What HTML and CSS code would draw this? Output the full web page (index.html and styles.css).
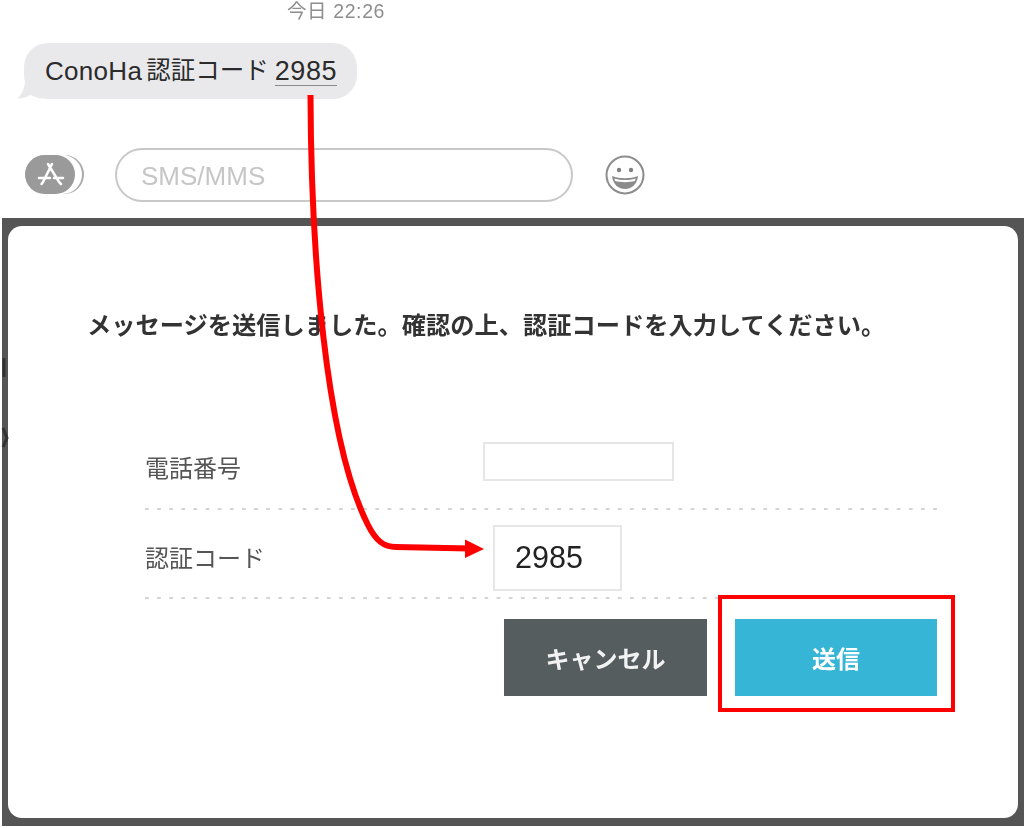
FILE: index.html
```html
<!DOCTYPE html>
<html lang="ja">
<head>
<meta charset="utf-8">
<title>ConoHa 認証コード</title>
<link rel="stylesheet" href="styles.css">
</head>
<body>
<div class="page">
  <section class="chat">
    <div class="time">今日 22:26</div>
    <div class="bubble-row">
      <div class="bubble">
        <svg class="tail" width="24" height="20" viewBox="0 0 24 20"><path d="M8 0C8 8 6 15 0 19.500C6 19.500 10 18 13 16L24 20V0Z"/></svg>
        <span class="bubble-latin">ConoHa</span><span class="bubble-cjk">認証コード</span><span class="code-link">2985</span>
      </div>
    </div>
    <div class="composer">
      <div class="apps">
        <svg width="60" height="40" viewBox="0 0 60 40">
          <rect class="apps-back" x="9" y="0" width="50" height="39" rx="19.500"/>
          <rect class="apps-gap" x="7" y="0" width="50" height="39" rx="19.500"/>
          <rect class="apps-pill" x="0" y="0" width="50" height="39" rx="19.500"/>
          <path class="apps-glyph" d="M27 9L18 27L16.500 29M23 9L34 27L36 29M14 23H25M29 23H38"/>
        </svg>
      </div>
      <div class="sms">SMS/MMS</div>
      <svg class="emoji" width="40" height="40" viewBox="0 0 40 40">
        <circle class="emoji-face" cx="20" cy="20" r="18.500"/>
        <circle class="emoji-eye" cx="14" cy="15" r="2.200"/>
        <circle class="emoji-eye" cx="26" cy="15" r="2.200"/>
        <path class="emoji-mouth" d="M7 21C15 24 25 24 33 21C32 30 26 34 20 34C14 34 8 30 7 21Z"/>
        <path class="emoji-teeth" d="M9.500 23.500C16 25.500 24 25.500 30.500 23.500L30 26C24 27.500 16 27.500 10 26Z"/>
      </svg>
    </div>
  </section>
  <section class="overlay">
    <div class="dialog">
      <p class="message">メッセージを送信しました。確認の上、認証コードを入力してください。</p>
      <div class="form">
        <div class="row row-phone">
          <div class="label">電話番号</div>
          <div class="input input-phone"></div>
        </div>
        <div class="row row-code">
          <div class="label">認証コード</div>
          <div class="input input-code">2985</div>
        </div>
      </div>
      <div class="actions">
        <div class="btn btn-cancel">キャンセル</div>
        <div class="btn btn-send">送信</div>
      </div>
    </div>
  </section>
  <svg class="annotation" width="1024" height="828" viewBox="0 0 1024 828">
    <path class="edge-mark" d="M4 358V377M3 428L7 438L3 447"/>
    <path class="arrow-line" d="M310.500 95C311 250 325 440 368 525C376 541 384 547 396 547L470 548.500"/>
    <path class="arrow-head" d="M465 539.500L484 549L465 558Z"/>
    <rect class="red-box" x="720" y="597" width="233" height="113"/>
  </svg>
</div>
</body>
</html>
```

FILE: styles.css
```css
* { box-sizing: border-box; }
html, body { margin: 0; padding: 0; background: #fff; }
body { font-family: "Liberation Sans", "Noto Sans CJK JP", sans-serif; }
.page { position: relative; width: 1024px; height: 828px; overflow: hidden; filter: blur(.4px); }

.chat { height: 218px; padding-top: 1px; }
.time { height: 42px; padding-left: 287px; font-size: 19.500px; line-height: 20px; color: #8e8e8e; letter-spacing: .6px; }
.bubble-row { padding-left: 24px; height: 56px; }
.bubble { position: relative; display: flex; height: 56px; width: 333px; padding-left: 21px; background: #e9e9eb; border-radius: 24px; font-size: 24.500px; line-height: 56px; color: #2b2b2b; white-space: nowrap; }
.bubble-latin { font-size: 26px; letter-spacing: .3px; }
.bubble-cjk { margin-left: 4px; margin-right: 6px; }
.tail { position: absolute; left: -7px; bottom: 0; fill: #e9e9eb; }
.code-link { align-self: flex-start; height: 43px; font-size: 27px; letter-spacing: .6px; border-bottom: 1px solid #8a8a8a; }
.composer { display: flex; align-items: center; margin-top: 49px; padding-left: 25px; height: 54px; }
.apps { width: 90px; height: 40px; }
.apps-pill { fill: #9a9a9a; }
.apps-back { fill: #aaa; }
.apps-gap { fill: #fff; }
.apps-glyph { fill: none; stroke: #fff; stroke-width: 2.500; stroke-linecap: round; }
.sms { width: 458px; height: 54px; padding-left: 24px; border: 2px solid #c8c8c8; border-radius: 27px; font-size: 26px; line-height: 52px; color: #c6c6c6; }
.emoji { margin-left: 32px; }
.emoji-face { fill: #fff; stroke: #8c8c8c; stroke-width: 2; }
.emoji-eye { fill: #808080; }
.emoji-mouth { fill: #8c8c8c; }
.emoji-teeth { fill: #fff; }

.overlay { height: 608px; margin-left: 2px; padding: 8px 6px; background: #555; }
.dialog { height: 592px; background: #fff; border-radius: 14px; padding-left: 80px; font-family: "Noto Sans CJK JP", "Liberation Sans", sans-serif; }
.message { margin: 0 0 0 -1px; padding-top: 83px; height: 216px; font-size: 24.250px; font-weight: 700; line-height: 30px; color: #333; white-space: nowrap; }
.form { margin-left: 57px; width: 792px; }
.row { display: flex; align-items: flex-start; background-image: linear-gradient(90deg, #d4d4d4 34%, transparent 34%); background-size: 12.130px 2px; background-repeat: repeat-x; background-position: left bottom; }
.row-phone { height: 68px; }
.row-code { height: 89px; padding-top: 15px; }
.label { width: 338px; font-size: 24px; line-height: 50px; color: #555; }
.row-code .label { width: 348px; line-height: 64px; }
.input { border: 2px solid #e6e6e6; background: #fff; }
.input-phone { width: 191px; height: 39px; }
.input-code { width: 129px; height: 66px; padding-left: 20px; font-family: "Liberation Sans", sans-serif; font-size: 30.500px; line-height: 60px; color: #222; }
.actions { display: flex; gap: 28px; margin: 20px 0 0 416px; }
.btn { width: 202px; height: 77px; font-size: 24px; font-weight: 700; line-height: 77px; text-align: center; color: #fff; }
.btn-cancel { width: 203px; background: #565d5f; color: #f2f2f2; }
.btn-send { background: #36b5d6; }

.annotation { position: absolute; left: 0; top: 0; pointer-events: none; }
.edge-mark { fill: none; stroke: #333; stroke-width: 3; }
.arrow-line { fill: none; stroke: #f00; stroke-width: 6; }
.arrow-head { fill: #f00; }
.red-box { fill: none; stroke: #f00; stroke-width: 4; }
```
